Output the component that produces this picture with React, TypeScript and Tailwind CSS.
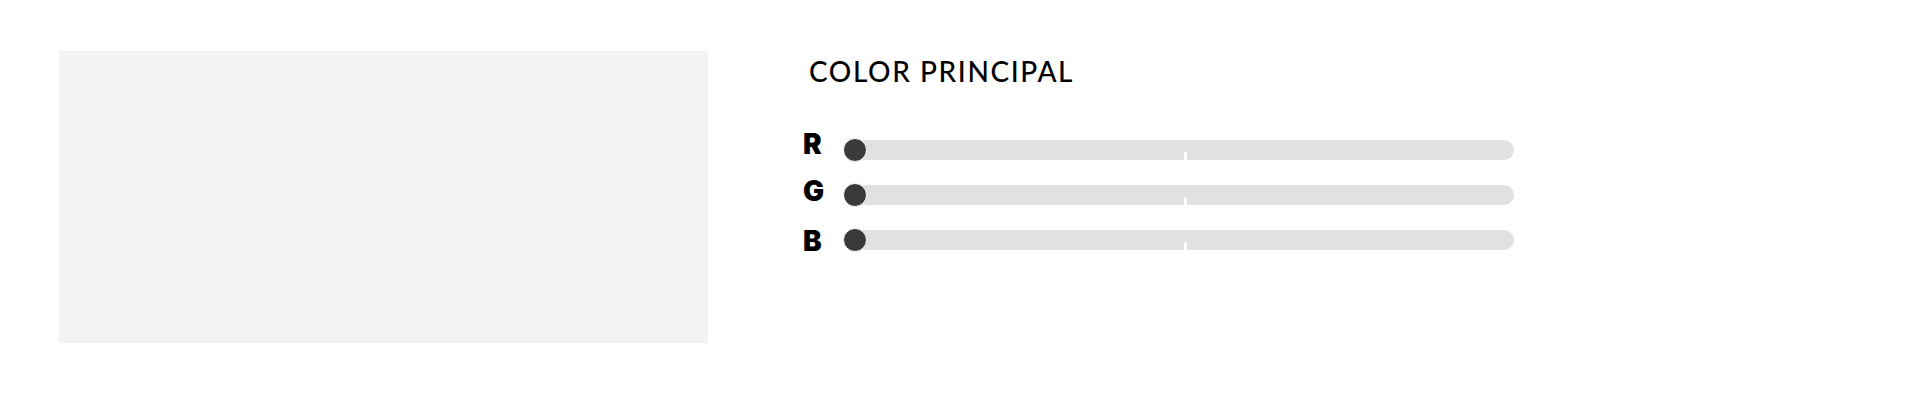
const CHANNELS = [
  { key: "R", labelShift: "-translate-y-[6px]" },
  { key: "G", labelShift: "-translate-y-[4px]" },
  { key: "B", labelShift: "translate-y-[1px]" },
];

function Slider() {
  return (
    <div className="relative h-[24px] w-[671px]">
      <div className="absolute left-[11px] top-[2px] h-[20px] w-[660px] rounded-full bg-[#e1e1e1]">
        <span className="absolute left-[330px] top-[12px] h-[8px] w-[3px] rounded-t-full bg-white" />
      </div>
      <span className="absolute left-0 top-0 h-[24px] w-[24px] rounded-full border border-white bg-[#3a3a3a]" />
    </div>
  );
}

export default function App() {
  return (
    <div className="flex h-[400px] w-[1920px] bg-white pl-[59px] pt-[51px]">
      <div className="h-[292px] w-[649px] bg-[#f4f2f2]" />
      <div className="ml-[95px] flex flex-col">
        <h2 className="ml-[6px] mt-[4px] font-['Lato',sans-serif] text-[28px] font-medium leading-[32px] tracking-[1.6px] text-black">
          COLOR PRINCIPAL
        </h2>
        <div className="mt-[51px] flex flex-col gap-[21px]">
          {CHANNELS.map((c) => (
            <div key={c.key} className="flex h-[24px] items-center">
              <span
                className={`w-[40px] font-['Inter',sans-serif] text-[28px] font-black leading-none text-black ${c.labelShift}`}
              >
                {c.key}
              </span>
              <Slider />
            </div>
          ))}
        </div>
      </div>
    </div>
  );
}
